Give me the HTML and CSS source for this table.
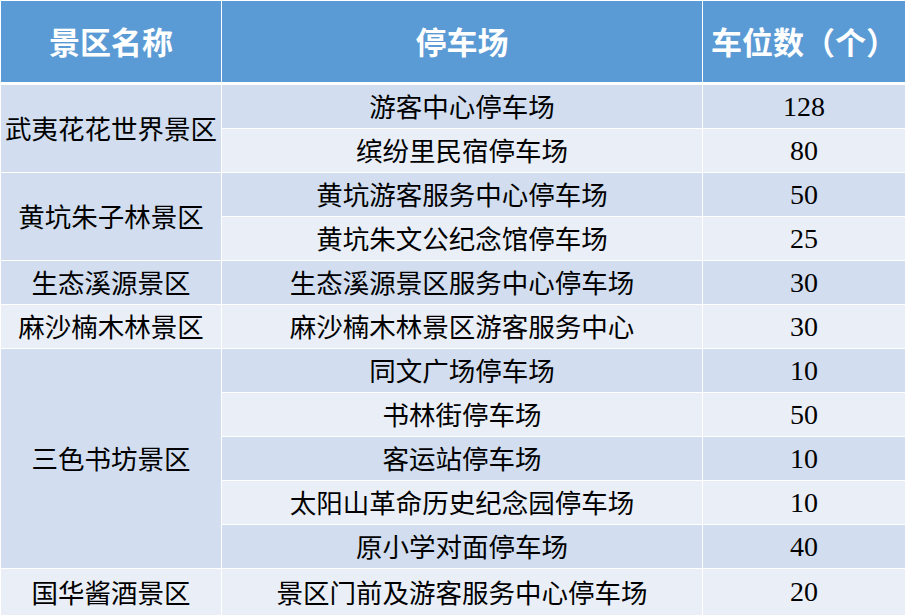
FILE: index.html
```html
<!DOCTYPE html>
<html lang="zh-CN">
<head>
<meta charset="utf-8">
<title>景区停车场</title>
<link rel="stylesheet" href="styles.css">
</head>
<body>
<table class="parking">
  <colgroup>
    <col class="c1"><col class="c2"><col class="c3">
  </colgroup>
  <thead>
    <tr><th>景区名称</th><th>停车场</th><th>车位数（个）</th></tr>
  </thead>
  <tbody>
    <tr class="dark"><td rowspan="2" class="dark">武夷花花世界景区</td><td>游客中心停车场</td><td class="num">128</td></tr>
    <tr class="light"><td>缤纷里民宿停车场</td><td class="num">80</td></tr>
    <tr class="dark"><td rowspan="2" class="dark">黄坑朱子林景区</td><td>黄坑游客服务中心停车场</td><td class="num">50</td></tr>
    <tr class="light"><td>黄坑朱文公纪念馆停车场</td><td class="num">25</td></tr>
    <tr class="dark"><td class="dark">生态溪源景区</td><td>生态溪源景区服务中心停车场</td><td class="num">30</td></tr>
    <tr class="light"><td class="light">麻沙楠木林景区</td><td>麻沙楠木林景区游客服务中心</td><td class="num">30</td></tr>
    <tr class="dark"><td rowspan="5" class="dark">三色书坊景区</td><td>同文广场停车场</td><td class="num">10</td></tr>
    <tr class="light"><td>书林街停车场</td><td class="num">50</td></tr>
    <tr class="dark"><td>客运站停车场</td><td class="num">10</td></tr>
    <tr class="light"><td>太阳山革命历史纪念园停车场</td><td class="num">10</td></tr>
    <tr class="dark"><td>原小学对面停车场</td><td class="num">40</td></tr>
    <tr class="light last"><td class="light">国华酱酒景区</td><td>景区门前及游客服务中心停车场</td><td class="num">20</td></tr>
  </tbody>
</table>
</body>
</html>
```

FILE: styles.css
```css
html, body {
  margin: 0;
  padding: 0;
  background: #ffffff;
}

.parking {
  border-collapse: separate;
  border-spacing: 1px;
  table-layout: fixed;
  width: 906px;
  font-family: "Noto Sans CJK SC", "Liberation Serif", sans-serif;
  color: #000000;
}

.c1 { width: 220px; }
.c2 { width: 480px; }
.c3 { width: 202px; }

.parking th {
  box-sizing: border-box;
  height: 83px;
  padding: 0 0 2px 0;
  background: #5b9bd5;
  background-clip: padding-box;
  border-bottom: 2px solid #ffffff;
  color: #ffffff;
  font-size: 31px;
  font-weight: 700;
  text-align: center;
  vertical-align: middle;
}

.parking td {
  height: 43px;
  padding: 0;
  font-size: 26.5px;
  font-weight: 400;
  text-align: center;
  vertical-align: middle;
  line-height: 1;
  white-space: nowrap;
}

.parking tr.last td {
  height: 46px;
  padding-bottom: 3px;
}

.dark td, td.dark {
  background: #d2deef;
}

.light td, td.light {
  background: #eaeff7;
}

.parking td.num {
  font-family: "Liberation Serif", serif;
  font-size: 28px;
}
```
